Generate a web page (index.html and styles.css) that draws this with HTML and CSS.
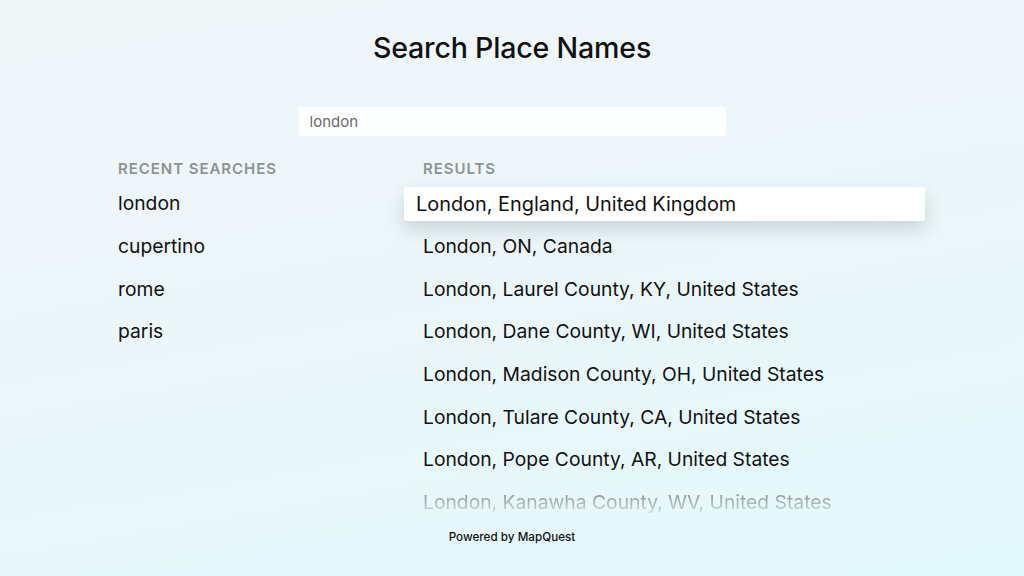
FILE: index.html
```html
<!DOCTYPE html>
<html lang="en">
<head>
    <meta charset="UTF-8">
    <meta name="viewport" content="width=device-width, initial-scale=1.0">
    <title>Search Place Names</title>
    <link rel="stylesheet" href="styles.css">
</head>
<body>
    <main class="page">
        <h1 class="title">Search Place Names</h1>

        <div class="searchBox">
            <input type="text" class="searchInput" value="london">
        </div>

        <div class="columns">
            <section class="recent">
                <h2 class="sectionLabel">RECENT SEARCHES</h2>
                <ul class="list">
                    <li class="row">london</li>
                    <li class="row">cupertino</li>
                    <li class="row">rome</li>
                    <li class="row">paris</li>
                </ul>
            </section>

            <section class="results">
                <h2 class="sectionLabel">RESULTS</h2>
                <ul class="list">
                    <li class="row focused"><span class="card">London, England, United Kingdom</span></li>
                    <li class="row">London, ON, Canada</li>
                    <li class="row">London, Laurel County, KY, United States</li>
                    <li class="row">London, Dane County, WI, United States</li>
                    <li class="row">London, Madison County, OH, United States</li>
                    <li class="row">London, Tulare County, CA, United States</li>
                    <li class="row">London, Pope County, AR, United States</li>
                    <li class="row fading">London, Kanawha County, WV, United States</li>
                </ul>
            </section>
        </div>

        <footer class="poweredBy">Powered by MapQuest</footer>
    </main>
</body>
</html>
```

FILE: styles.css
```css
html, body {
    margin: 0;
    height: 100%;
}
body {
    font-family: Inter, "Noto Sans", Arial, sans-serif;
    color: #111;
    background: linear-gradient(170deg, #f1f6f9 0%, #ecf6f9 45%, #e3f9fd 100%);
    overflow: hidden;
}
.page {
    display: flex;
    flex-direction: column;
    align-items: center;
    height: 100%;
}
.title {
    margin: 0;
    padding-top: 31px;
    font-size: 28.6px;
    line-height: 34px;
    font-weight: 500;
    letter-spacing: -0.2px;
}
.searchBox {
    margin-top: 42px;
    width: 427px;
    height: 29px;
    background-color: rgba(255, 255, 255, 0.85);
    border-radius: 2px;
}
.searchInput {
    box-sizing: border-box;
    width: 100%;
    height: 100%;
    padding: 0 11px;
    border: none;
    outline: none;
    background: none;
    font-family: inherit;
    font-size: 15px;
    color: #6b6b6b;
}
.columns {
    align-self: stretch;
    display: grid;
    grid-template-columns: 305px 502px;
    padding-left: 118px;
    margin-top: 24px;
}
.sectionLabel {
    margin: 0 0 4px 0;
    font-size: 15px;
    line-height: 18px;
    font-weight: 600;
    color: #8b9396;
    letter-spacing: 0.95px;
}
.list {
    list-style: none;
    margin: 0;
    padding: 0;
}
.row {
    display: flex;
    align-items: center;
    height: 42.7px;
    font-size: 19.3px;
    white-space: nowrap;
}
/* last visible result fades out towards the footer */
.fading {
    -webkit-mask-image: linear-gradient(to bottom, rgba(0, 0, 0, 0.42) 30%, rgba(0, 0, 0, 0.12) 75%);
    mask-image: linear-gradient(to bottom, rgba(0, 0, 0, 0.42) 30%, rgba(0, 0, 0, 0.12) 75%);
}
/* focused result grows a little and sits on a raised white card */
.focused .card {
    display: flex;
    align-items: center;
    box-sizing: border-box;
    width: 521px;
    height: 34px;
    margin-top: 1px;
    margin-left: -19px;
    padding-left: 12px;
    font-size: 19.9px;
    background-color: #fff;
    border-radius: 3px;
    box-shadow: 0 8px 18px rgba(40, 60, 70, 0.18);
}
.poweredBy {
    margin-top: 6px;
    font-size: 11.7px;
    line-height: 15px;
    font-weight: 500;
}
```
